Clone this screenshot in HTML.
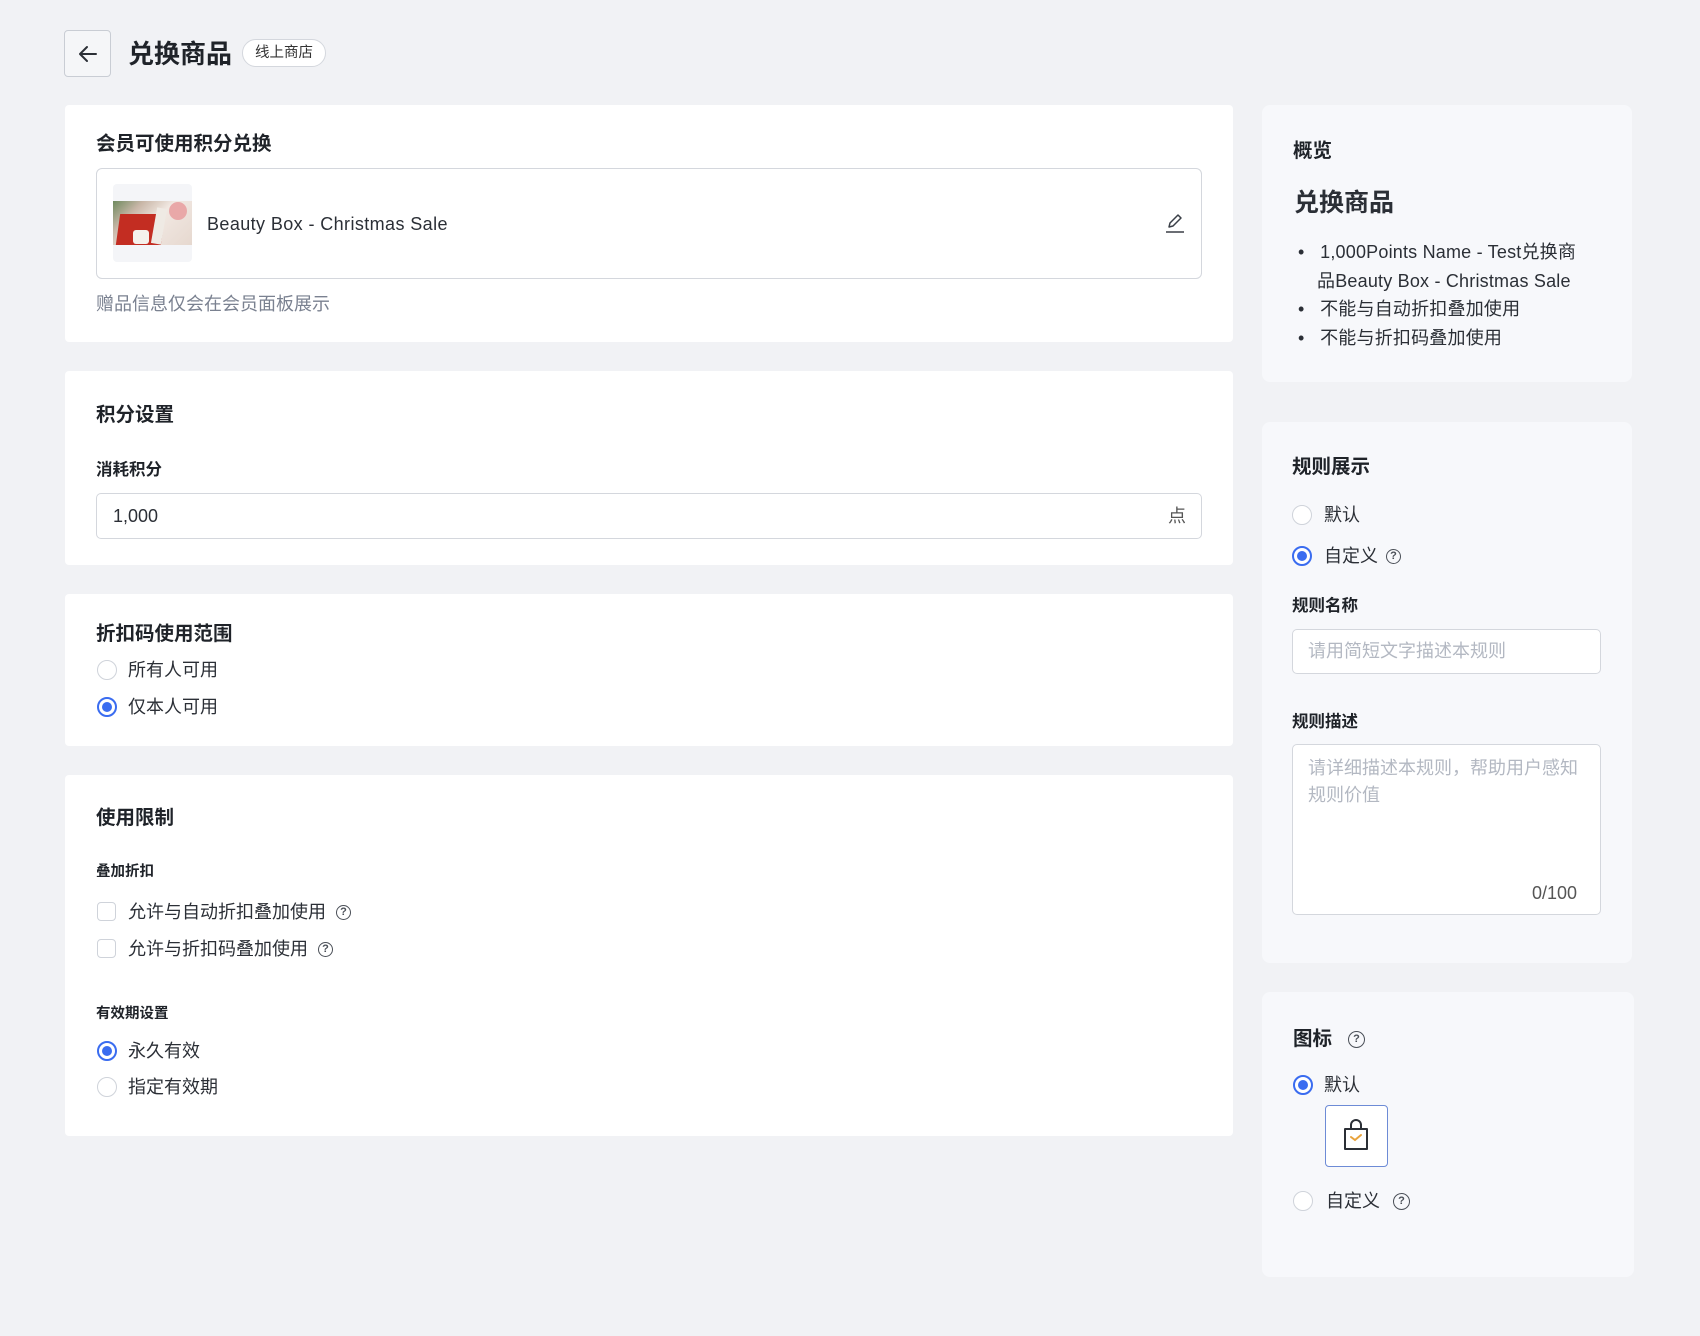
<!DOCTYPE html>
<html><head><meta charset="utf-8"><style>
*{margin:0;padding:0;box-sizing:border-box}
body{width:1700px;height:1336px;background:#f1f2f5;font-family:"Liberation Sans","Noto Sans CJK SC",sans-serif;color:#1f2329;position:relative;overflow:hidden}
.a{position:absolute;white-space:nowrap}
.card{position:absolute;background:#fff;border-radius:4px}
.rc{position:absolute;background:#f7f8fb;border-radius:8px}
.t{font-size:19.5px;font-weight:700;line-height:26px}
.lb{font-size:16.5px;font-weight:700;line-height:22px}
.tx{font-size:18px;line-height:24px;color:#2b2f36}
.radio{position:absolute;width:20px;height:20px;border-radius:50%;border:1.5px solid #cfd3da;background:#fff}
.radio.on{border:2px solid #3a6cf0}
.radio.on::after{content:"";position:absolute;left:3px;top:3px;width:10px;height:10px;border-radius:50%;background:#3a6cf0}
.cb{position:absolute;width:19px;height:19px;border:1.5px solid #cfd3da;border-radius:4px;background:#fff}
.q{position:absolute;width:15px;height:15px;border:1.3px solid #4a4f57;border-radius:50%;font-size:11px;line-height:13px;text-align:center;color:#4a4f57;font-weight:700}
</style></head><body>
<div class="a" style="left:64px;top:30px;width:47px;height:47px;border:1px solid #c9cdd4;border-radius:4px;background:#f5f6f8"></div>
<svg class="a" style="left:76px;top:42px" width="24" height="24" viewBox="0 0 24 24"><path d="M20 12H4M11 5l-7 7 7 7" fill="none" stroke="#2b2f36" stroke-width="2" stroke-linecap="round" stroke-linejoin="round"/></svg>
<div class="a" style="left:128px;top:38px;font-size:26px;font-weight:700;line-height:32px">兑换商品</div>
<div class="a" style="left:242px;top:39px;width:84px;height:28px;border:1px solid #d4d7dd;border-radius:14px;background:#fff;font-size:14.5px;line-height:26px;text-align:center;color:#333">线上商店</div>

<div class="card" style="left:65px;top:105px;width:1168px;height:237px"></div>
<div class="a t" style="left:96px;top:131px">会员可使用积分兑换</div>
<div class="a" style="left:96px;top:168px;width:1106px;height:111px;border:1px solid #d4d7dd;border-radius:6px;background:#fff"></div>
<div class="a" style="left:113px;top:184px;width:79px;height:78px;background:#f4f5f8;border-radius:4px;overflow:hidden">
 <div style="position:absolute;left:0;top:17px;width:79px;height:44px;background:linear-gradient(135deg,#6e8a5e 0%,#c9b7a8 25%,#f1e8e2 50%,#e6d8cf 100%)"></div>
 <div style="position:absolute;left:5px;top:30px;width:45px;height:31px;background:#c32d22;transform:skewX(-8deg)"></div>
 <div style="position:absolute;left:20px;top:46px;width:16px;height:14px;background:#f5f1ec;border-radius:3px"></div>
 <div style="position:absolute;left:41px;top:24px;width:10px;height:36px;background:#efeae4;transform:rotate(10deg)"></div>
 <div style="position:absolute;left:56px;top:18px;width:18px;height:18px;border-radius:50%;background:#e9a8a8"></div>
</div>
<div class="a tx" style="left:207px;top:212px;letter-spacing:0.4px">Beauty Box - Christmas Sale</div>
<svg class="a" style="left:1164px;top:212px" width="22" height="22" viewBox="0 0 22 22"><path d="M5 15l1-4 8-8 3 3-8 8z" fill="none" stroke="#3a3f47" stroke-width="1.5" stroke-linejoin="round"/><path d="M2 20h18" stroke="#3a3f47" stroke-width="1.6"/></svg>
<div class="a" style="left:96px;top:292px;font-size:18px;line-height:24px;color:#7a8190">赠品信息仅会在会员面板展示</div>

<div class="card" style="left:65px;top:371px;width:1168px;height:194px"></div>
<div class="a t" style="left:96px;top:402px">积分设置</div>
<div class="a lb" style="left:96px;top:459px">消耗积分</div>
<div class="a" style="left:96px;top:493px;width:1106px;height:46px;border:1px solid #d4d7dd;border-radius:5px;background:#fff"></div>
<div class="a tx" style="left:113px;top:504px">1,000</div>
<div class="a tx" style="left:1168px;top:504px;color:#555">点</div>

<div class="card" style="left:65px;top:594px;width:1168px;height:152px"></div>
<div class="a t" style="left:96px;top:621px">折扣码使用范围</div>
<div class="radio" style="left:97px;top:660px"></div><div class="a tx" style="left:128px;top:658px">所有人可用</div>
<div class="radio on" style="left:97px;top:697px"></div><div class="a tx" style="left:128px;top:695px">仅本人可用</div>

<div class="card" style="left:65px;top:775px;width:1168px;height:361px"></div>
<div class="a t" style="left:96px;top:805px">使用限制</div>
<div class="a" style="left:96px;top:862px;font-size:14.5px;font-weight:700;line-height:20px">叠加折扣</div>
<div class="cb" style="left:97px;top:902px"></div><div class="a tx" style="left:128px;top:900px">允许与自动折扣叠加使用</div><div class="q" style="left:336px;top:905px">?</div>
<div class="cb" style="left:97px;top:939px"></div><div class="a tx" style="left:128px;top:937px">允许与折扣码叠加使用</div><div class="q" style="left:318px;top:942px">?</div>
<div class="a" style="left:96px;top:1004px;font-size:14.5px;font-weight:700;line-height:20px">有效期设置</div>
<div class="radio on" style="left:97px;top:1041px"></div><div class="a tx" style="left:128px;top:1039px">永久有效</div>
<div class="radio" style="left:97px;top:1077px"></div><div class="a tx" style="left:128px;top:1075px">指定有效期</div>

<div class="rc" style="left:1262px;top:105px;width:370px;height:277px"></div>
<div class="a t" style="left:1293px;top:138px">概览</div>
<div class="a" style="left:1294px;top:188px;font-size:25px;font-weight:700;line-height:30px;color:#2b2f36">兑换商品</div>
<div class="a" style="left:1298px;top:238px;font-size:18px;line-height:28.5px;color:#2b2f36;letter-spacing:0.2px">
<div>•&nbsp;&nbsp;&nbsp;1,000Points Name - Test兑换商</div>
<div style="padding-left:19px">品Beauty Box - Christmas Sale</div>
<div>•&nbsp;&nbsp;&nbsp;不能与自动折扣叠加使用</div>
<div>•&nbsp;&nbsp;&nbsp;不能与折扣码叠加使用</div></div>

<div class="rc" style="left:1262px;top:422px;width:370px;height:541px"></div>
<div class="a t" style="left:1292px;top:454px">规则展示</div>
<div class="radio" style="left:1292px;top:505px"></div><div class="a tx" style="left:1324px;top:503px">默认</div>
<div class="radio on" style="left:1292px;top:546px"></div><div class="a tx" style="left:1324px;top:544px">自定义</div><div class="q" style="left:1386px;top:549px">?</div>
<div class="a lb" style="left:1292px;top:595px">规则名称</div>
<div class="a" style="left:1292px;top:629px;width:309px;height:45px;border:1px solid #d4d7dd;border-radius:5px;background:#fff"></div>
<div class="a tx" style="left:1308px;top:639px;color:#b3b8c2">请用简短文字描述本规则</div>
<div class="a lb" style="left:1292px;top:711px">规则描述</div>
<div class="a" style="left:1292px;top:744px;width:309px;height:171px;border:1px solid #d4d7dd;border-radius:5px;background:#fff"></div>
<div class="a tx" style="left:1308px;top:755px;color:#b3b8c2;line-height:27px">请详细描述本规则，帮助用户感知<br>规则价值</div>
<div class="a tx" style="left:1532px;top:881px;color:#555">0/100</div>

<div class="rc" style="left:1262px;top:992px;width:372px;height:285px"></div>
<div class="a t" style="left:1293px;top:1026px">图标</div><div class="q" style="left:1348px;top:1031px;width:17px;height:17px;line-height:15px">?</div>
<div class="radio on" style="left:1293px;top:1075px"></div><div class="a tx" style="left:1324px;top:1073px">默认</div>
<div class="a" style="left:1325px;top:1105px;width:63px;height:62px;border:1.5px solid #6d8bd6;border-radius:4px;background:#fff"></div>
<svg class="a" style="left:1340px;top:1118px" width="32" height="36" viewBox="0 0 32 36"><path d="M5 11h22v20H5z" fill="none" stroke="#2b2f36" stroke-width="2" stroke-linejoin="round"/><path d="M11 11V7a5 5 0 0 1 10 0v4" fill="none" stroke="#2b2f36" stroke-width="2"/><path d="M11 19l4 3 6-5" fill="none" stroke="#e8a23a" stroke-width="2" stroke-linecap="round"/></svg>
<div class="radio" style="left:1293px;top:1191px"></div><div class="a tx" style="left:1326px;top:1189px">自定义</div><div class="q" style="left:1393px;top:1193px;width:17px;height:17px;line-height:15px">?</div>
</body></html>
